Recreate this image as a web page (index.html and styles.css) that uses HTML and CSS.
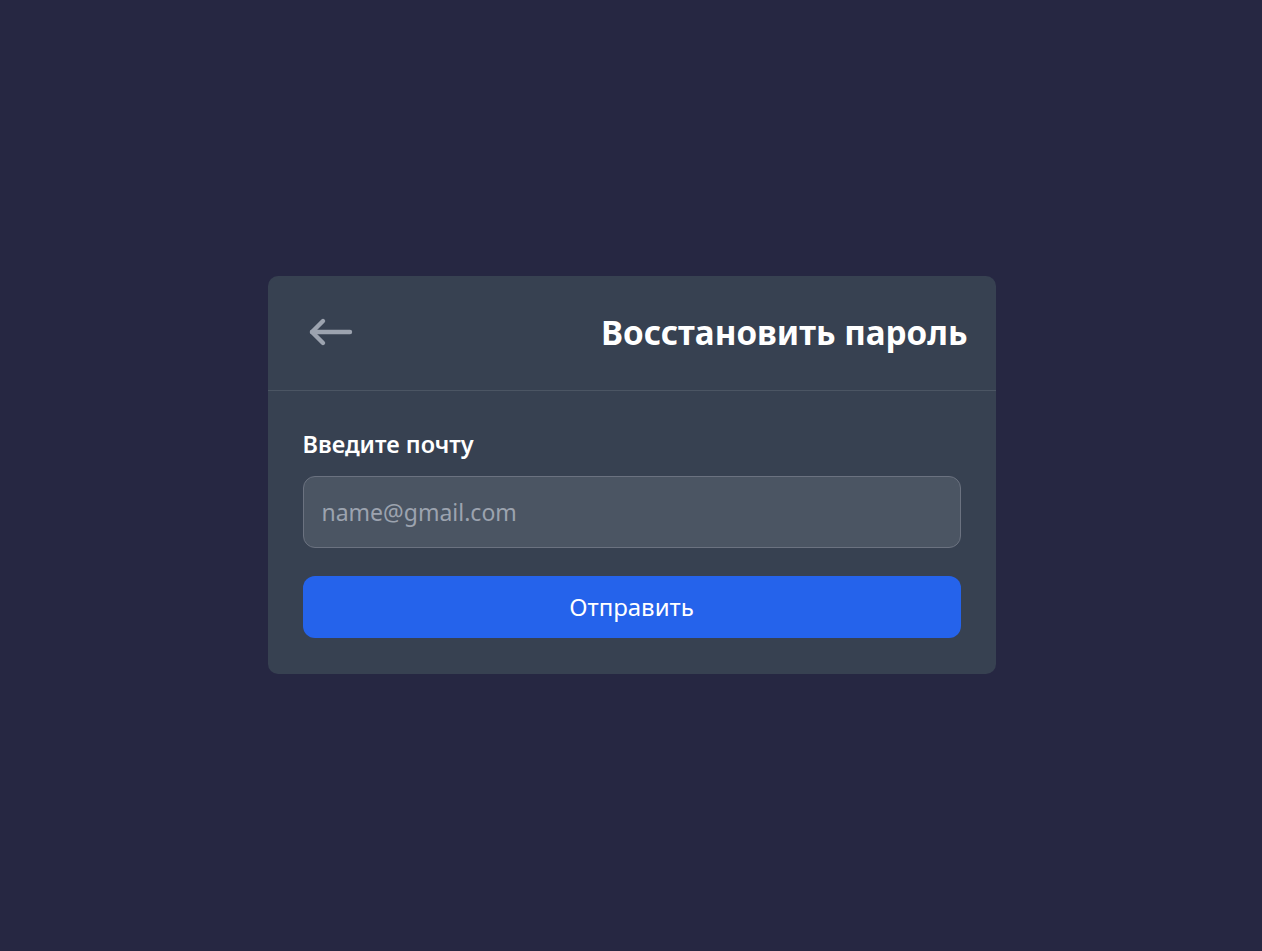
FILE: index.html
```html
<!DOCTYPE html>
<html lang="ru">
<head>
<meta charset="utf-8">
<title>Восстановить пароль</title>
<link rel="stylesheet" href="styles.css">
</head>
<body>
<main class="page">
  <section class="card">
    <header class="card-header">
      <button class="back" type="button" aria-label="Назад">
        <svg width="48" height="32" viewBox="0 0 48 32" fill="none" stroke="currentColor" stroke-width="4.4" stroke-linecap="round" stroke-linejoin="round">
          <path d="M6 16H44"/>
          <path d="M17 5L6 16L17 27"/>
        </svg>
      </button>
      <h1 class="title">Восстановить пароль</h1>
    </header>
    <form class="card-body">
      <label class="label" for="email">Введите почту</label>
      <input class="input" id="email" type="email" placeholder="name@gmail.com">
      <button class="submit" type="button">Отправить</button>
    </form>
  </section>
</main>
</body>
</html>
```
FILE: styles.css
```css
* { box-sizing: border-box; }
html, body { margin: 0; padding: 0; }
body {
  background: #262742;
  font-family: "Noto Sans", "Open Sans", sans-serif;
  color: #fff;
}
.page {
  min-height: 951px;
  display: flex;
  align-items: center;
  justify-content: center;
  padding-bottom: 2px;
}
.card {
  width: 728px;
  background: #374151;
  border-radius: 10px;
  margin-left: 1px;
}
.card-header {
  display: flex;
  align-items: center;
  justify-content: space-between;
  height: 115px;
  padding: 0 28px 0 38px;
  border-bottom: 1px solid #4b5563;
}
.back {
  background: none;
  border: 0;
  padding: 0;
  color: #9ca3af;
  display: flex;
  margin-top: -2px;
  cursor: pointer;
}
.title {
  margin: 0;
  font-size: 33.2px;
  font-weight: 700;
  line-height: 1.2;
}
.card-body {
  display: flex;
  flex-direction: column;
  padding: 38px 35px 36px;
}
.label {
  font-size: 23.5px;
  font-weight: 600;
  line-height: 30px;
  margin-bottom: 17px;
}
.input {
  height: 72px;
  background: #4b5563;
  border: 1px solid #6b7280;
  border-radius: 12px;
  padding: 0 18px;
  font-family: inherit;
  font-size: 23px;
  color: #fff;
  outline: none;
  margin-bottom: 28px;
}
.input::placeholder { color: #9ca3af; }
.submit {
  height: 62px;
  background: #2563eb;
  border: 0;
  border-radius: 12px;
  color: #fff;
  font-family: inherit;
  font-size: 24px;
  cursor: pointer;
}
```
